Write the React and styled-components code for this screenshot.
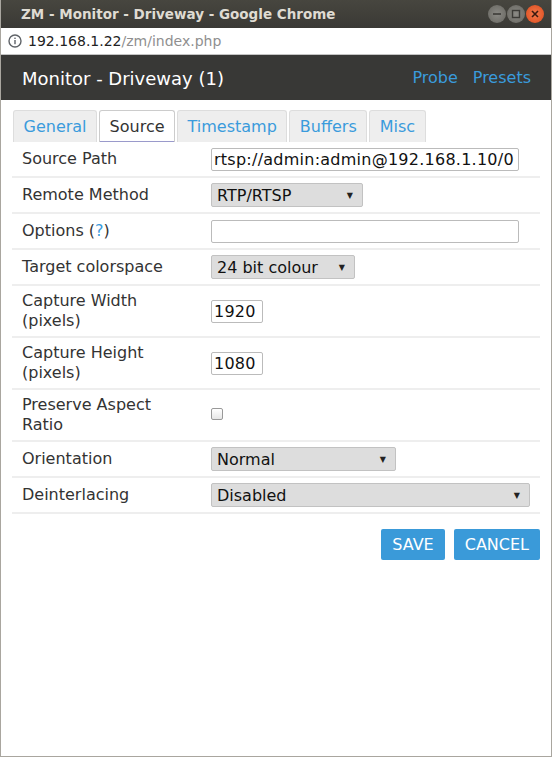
import React from 'react'
import styled, { createGlobalStyle } from 'styled-components'

const Global = createGlobalStyle`
  html, body { margin: 0; padding: 0; background: #fff; }
  * { box-sizing: border-box; }
`

const Window = styled.div`
  width: 552px;
  height: 757px;
  display: flex;
  flex-direction: column;
  border: 1px solid #a9a69f;
  border-top: none;
  background: #fff;
  font-family: "DejaVu Sans", Verdana, sans-serif;
  color: #333;
  overflow: hidden;
`
const TitleBar = styled.div`
  height: 28px;
  display: flex;
  align-items: center;
  padding: 0 8px 0 21px;
  background: linear-gradient(#47463f, #3a3935);
  margin: 0 -1px;
`
const Title = styled.div`
  flex: 1;
  color: #dfdbd2;
  font-weight: bold;
  font-size: 13.5px;
`
const WinButtons = styled.div`
  display: flex;
  gap: 1px;
`
const WinBtn = styled.div`
  width: 18px;
  height: 18px;
  border-radius: 50%;
  display: flex;
  align-items: center;
  justify-content: center;
  background: ${p => (p.close ? 'radial-gradient(#f37a4c, #dc4a1c)' : 'radial-gradient(#8b8a85, #66655f)')};
`
const AddressBar = styled.div`
  height: 27px;
  display: flex;
  align-items: center;
  gap: 6px;
  padding-left: 7px;
  background: #fff;
  border-bottom: 1px solid #c4c4c4;
  font-size: 14px;
`
const Host = styled.span`
  color: #222;
`
const PathPart = styled.span`
  color: #8f8f8f;
`
const NavBar = styled.div`
  height: 45px;
  background: #383836;
  display: flex;
  align-items: center;
  padding: 0 20px 0 21px;
`
const NavTitle = styled.div`
  flex: 1;
  color: #fff;
  font-size: 18px;
  margin-top: 2px;
`
const NavLink = styled.a`
  color: #3a9bdc;
  font-size: 16px;
  margin-left: 15px;
  text-decoration: none;
`
const Body = styled.div`
  padding: 10px 11px 0 11px;
`
const Tabs = styled.div`
  display: flex;
  gap: 2px;
  padding-left: 1px;
  height: 32px;
`
const Tab = styled.div`
  padding: 0 9.5px;
  display: flex;
  align-items: center;
  font-size: 16px;
  border: 1px solid #ddd;
  border-bottom: none;
  border-radius: 3px 3px 0 0;
  background: ${p => (p.active ? '#fff' : '#eee')};
  color: ${p => (p.active ? '#333' : '#3a9bdc')};
  border-color: ${p => (p.active ? '#ccc' : '#ddd')};
  ${p => p.active && 'box-shadow: inset 0 -1px 0 #9a9acb;'}
`
const Table = styled.div`
  display: flex;
  flex-direction: column;
`
const Row = styled.div`
  display: flex;
  align-items: center;
  min-height: ${p => (p.tall ? '52px' : '36px')};
  border-bottom: 2px solid #eee;
`
const Label = styled.div`
  width: 199px;
  padding-left: 10px;
  font-size: 16px;
  line-height: 20px;
`
const Help = styled.span`
  color: #3a9bdc;
`
const Value = styled.div`
  flex: 1;
  display: flex;
  align-items: center;
`
const TextInput = styled.div`
  width: ${p => p.w}px;
  height: 23px;
  border: 1px solid #bbb;
  border-radius: 2px;
  padding: 0 2px;
  font-size: 16px;
  letter-spacing: 0.25px;
  display: flex;
  align-items: center;
  color: #111;
  white-space: nowrap;
  overflow: hidden;
`
const Select = styled.div`
  width: ${p => p.w}px;
  height: 24px;
  border: 1px solid #c2c2c2;
  border-radius: 2px;
  background: #ddd;
  display: flex;
  align-items: center;
  justify-content: space-between;
  padding: 0 9px 0 5px;
  font-size: 16px;
  color: #111;
`
const Arrow = styled.span`
  font-size: 8px;
  color: #222;
`
const Check = styled.div`
  width: 12px;
  height: 12px;
  border: 1px solid #999;
  border-radius: 2px;
  background: linear-gradient(#fff, #e6e6e6);
  margin-top: -2px;
`
const Actions = styled.div`
  display: flex;
  justify-content: flex-end;
  gap: 9px;
  padding-top: 15px;
`
const Button = styled.div`
  height: 31px;
  padding: 0 11px;
  display: flex;
  align-items: center;
  background: #3a9ad9;
  color: #fff;
  border-radius: 2px;
  font-size: 16px;
`

const InfoIcon = () => (
  <svg width="14" height="14" viewBox="0 0 14 14">
    <circle cx="7" cy="7" r="6" fill="none" stroke="#5f6368" strokeWidth="1.4" />
    <rect x="6.3" y="6" width="1.4" height="4.2" fill="#5f6368" />
    <rect x="6.3" y="3.6" width="1.4" height="1.4" fill="#5f6368" />
  </svg>
)

const App = () => {
  return (
    <Window>
      <Global />
      <TitleBar>
        <Title>ZM - Monitor - Driveway - Google Chrome</Title>
        <WinButtons>
          <WinBtn>
            <svg width="10" height="10" viewBox="0 0 10 10"><rect x="1" y="4.2" width="8" height="1.6" fill="#3c3b37" /></svg>
          </WinBtn>
          <WinBtn>
            <svg width="10" height="10" viewBox="0 0 10 10"><rect x="1.5" y="1.5" width="7" height="7" fill="none" stroke="#3c3b37" strokeWidth="1.4" /></svg>
          </WinBtn>
          <WinBtn close>
            <svg width="10" height="10" viewBox="0 0 10 10"><path d="M2 2 L8 8 M8 2 L2 8" stroke="#3a1a10" strokeWidth="1.6" /></svg>
          </WinBtn>
        </WinButtons>
      </TitleBar>
      <AddressBar>
        <InfoIcon />
        <div>
          <Host>192.168.1.22</Host>
          <PathPart>/zm/index.php</PathPart>
        </div>
      </AddressBar>
      <NavBar>
        <NavTitle>Monitor - Driveway (1)</NavTitle>
        <NavLink>Probe</NavLink>
        <NavLink>Presets</NavLink>
      </NavBar>
      <Body>
        <Tabs>
          <Tab>General</Tab>
          <Tab active>Source</Tab>
          <Tab>Timestamp</Tab>
          <Tab>Buffers</Tab>
          <Tab>Misc</Tab>
        </Tabs>
        <Table>
          <Row>
            <Label>Source Path</Label>
            <Value><TextInput w={308}>rtsp://admin:admin@192.168.1.10/0</TextInput></Value>
          </Row>
          <Row>
            <Label>Remote Method</Label>
            <Value><Select w={152}>RTP/RTSP<Arrow>▼</Arrow></Select></Value>
          </Row>
          <Row>
            <Label>Options (<Help>?</Help>)</Label>
            <Value><TextInput w={308} /></Value>
          </Row>
          <Row>
            <Label>Target colorspace</Label>
            <Value><Select w={144}>24 bit colour<Arrow>▼</Arrow></Select></Value>
          </Row>
          <Row tall>
            <Label>Capture Width<br />(pixels)</Label>
            <Value><TextInput w={52}>1920</TextInput></Value>
          </Row>
          <Row tall>
            <Label>Capture Height<br />(pixels)</Label>
            <Value><TextInput w={52}>1080</TextInput></Value>
          </Row>
          <Row tall>
            <Label>Preserve Aspect<br />Ratio</Label>
            <Value><Check /></Value>
          </Row>
          <Row>
            <Label>Orientation</Label>
            <Value><Select w={185}>Normal<Arrow>▼</Arrow></Select></Value>
          </Row>
          <Row>
            <Label>Deinterlacing</Label>
            <Value><Select w={319}>Disabled<Arrow>▼</Arrow></Select></Value>
          </Row>
        </Table>
        <Actions>
          <Button>SAVE</Button>
          <Button>CANCEL</Button>
        </Actions>
      </Body>
    </Window>
  )
}

export default App
